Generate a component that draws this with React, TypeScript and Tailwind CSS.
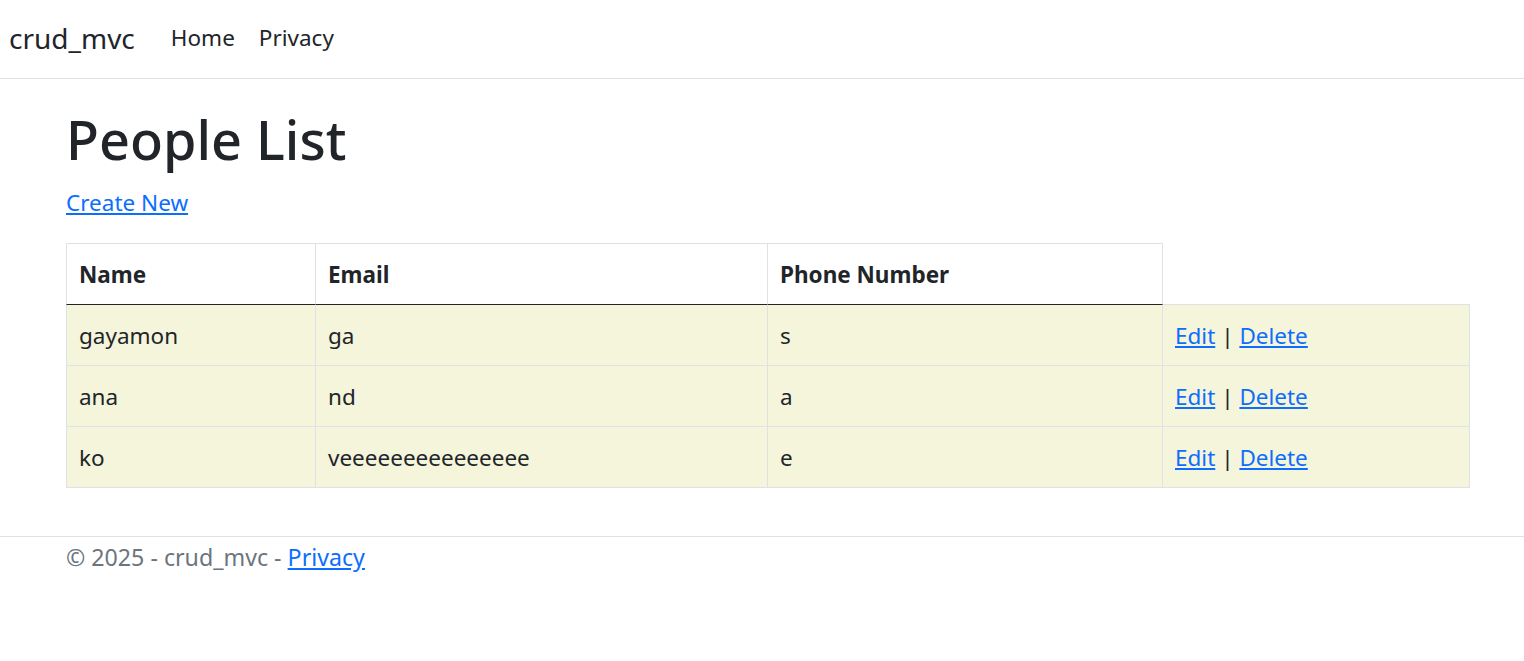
import React from 'react';

interface Person {
    name: string;
    email: string;
    phone: string;
}

const people: Person[] = [
    { name: 'gayamon', email: 'ga', phone: 's' },
    { name: 'ana', email: 'nd', phone: 'a' },
    { name: 'ko', email: 'veeeeeeeeeeeeeee', phone: 'e' },
];

const font = { fontFamily: '"Noto Sans", "Open Sans", sans-serif' };

export default function App() {
    return (
        <div className="min-h-[661px] bg-white text-[#212529] text-[22.5px] leading-[36px]" style={font}>
            {/* navbar */}
            <nav className="h-[79px] border-b border-[#dee2e6] flex items-start pl-[9px]">
                <a className="mt-[16px] text-[28px] leading-[45px] mr-[24px]">crud_mvc</a>
                <ul className="flex mt-[20px]">
                    <li><a className="px-[12px] block">Home</a></li>
                    <li><a className="px-[12px] block">Privacy</a></li>
                </ul>
            </nav>

            <main className="ml-[66px] w-[1404px] pt-[24px]">
                <h1 className="text-[54px] leading-[72px] font-medium mb-[10px]">People List</h1>
                <p className="mb-[22px]">
                    <a href="#" className="text-[#0d6efd] underline">Create New</a>
                </p>

                <table className="table-fixed w-[1404px] border-separate border-spacing-0">
                    <colgroup>
                        <col className="w-[250px]" />
                        <col className="w-[452px]" />
                        <col className="w-[395px]" />
                        <col className="w-[307px]" />
                    </colgroup>
                    <thead>
                        <tr>
                            <th className="text-left font-bold px-[12px] pt-[13px] pb-[11px] border-t border-l border-r border-b border-[#dee2e6] border-b-[#212529]">Name</th>
                            <th className="text-left font-bold px-[12px] pt-[13px] pb-[11px] border-t border-r border-b border-[#dee2e6] border-b-[#212529]">Email</th>
                            <th className="text-left font-bold px-[12px] pt-[13px] pb-[11px] border-t border-r border-b border-[#dee2e6] border-b-[#212529]">Phone Number</th>
                            <th className="border-t border-t-transparent border-b border-b-[#dee2e6]"></th>
                        </tr>
                    </thead>
                    <tbody>
                        {people.map((p, i) => (
                            <tr key={i} className="bg-[#f5f5dc]">
                                <td className="px-[12px] pt-[13px] pb-[11px] border-l border-r border-b border-[#dee2e6]">{p.name}</td>
                                <td className="px-[12px] pt-[13px] pb-[11px] border-r border-b border-[#dee2e6]">{p.email}</td>
                                <td className="px-[12px] pt-[13px] pb-[11px] border-r border-b border-[#dee2e6]">{p.phone}</td>
                                <td className="px-[12px] pt-[13px] pb-[11px] border-r border-b border-[#dee2e6]">
                                    <a href="#" className="text-[#0d6efd] underline">Edit</a> | <a href="#" className="text-[#0d6efd] underline">Delete</a>
                                </td>
                            </tr>
                        ))}
                    </tbody>
                </table>
            </main>

            <footer className="mt-[48px] border-t border-[#dee2e6] text-[#6c757d] text-[23.2px]">
                <div className="ml-[66px] pt-[2px]">
                    © 2025 - crud_mvc - <a href="#" className="text-[#0d6efd] underline">Privacy</a>
                </div>
            </footer>
        </div>
    );
}
